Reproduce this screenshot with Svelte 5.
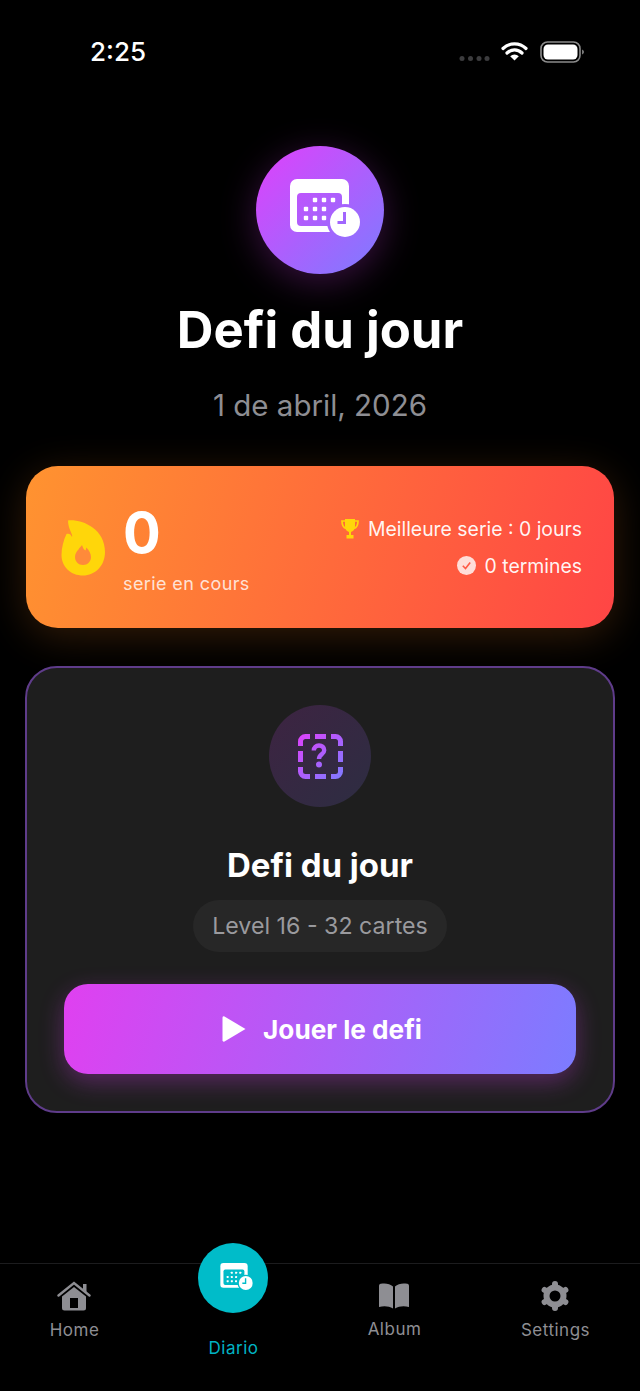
<script lang="ts">
  type Tab = { id: string; label: string };

  const tabs: Tab[] = [
    { id: 'home', label: 'Home' },
    { id: 'diario', label: 'Diario' },
    { id: 'album', label: 'Album' },
    { id: 'settings', label: 'Settings' },
  ];

  const dots = [
    [25, 21], [34, 21], [43, 21],
    [16, 30], [25, 30], [34, 30],
    [16, 39], [25, 39], [34, 39],
  ];
</script>

{#snippet calendar(id: string, w: number, h: number)}
  <svg width={w} height={h} viewBox="0 0 70 58" aria-hidden="true">
    <mask id={id}>
      <rect x="0" y="0" width="59" height="53" rx="7" fill="#fff" />
      <rect x="7" y="14" width="45" height="33" rx="4" fill="#000" />
      {#each dots as d}
        <rect x={d[0] - 2.2} y={d[1] - 2.2} width="4.4" height="4.4" rx="1" fill="#fff" />
      {/each}
      <circle cx="55" cy="43" r="18" fill="#000" />
      <circle cx="55" cy="43" r="15" fill="#fff" />
      <path d="M54.500 33v10.500h-7" fill="none" stroke="#000" stroke-width="3" />
    </mask>
    <rect width="70" height="58" fill="#fff" mask="url(#{id})" />
  </svg>
{/snippet}

<div class="app">
  <div class="status">
    <span class="time">2:25</span>
    <div class="status-icons">
      <svg class="signal" width="31" height="5" viewBox="0 0 31 5" aria-hidden="true">
        <circle cx="3" cy="2.5" r="2.5" /><circle cx="11.5" cy="2.5" r="2.5" /><circle cx="20" cy="2.5" r="2.5" /><circle cx="28" cy="2.5" r="2.5" />
      </svg>
      <svg width="27" height="20" viewBox="0 0 27 20" aria-hidden="true">
        <path d="M2 7.5a16.5 16.5 0 0 1 23 0M6 12a10.6 10.6 0 0 1 15 0" fill="none" stroke="#fff" stroke-width="3.2" stroke-linecap="round" />
        <path d="M13.5 19.5 9.2 15.2a6 6 0 0 1 8.6 0z" fill="#fff" />
      </svg>
      <svg class="battery" width="44" height="22" viewBox="0 0 44 22" aria-hidden="true">
        <rect x="1" y="1" width="39" height="20" rx="6.5" fill="none" stroke="#8b8b8b" stroke-width="1.6" />
        <rect x="3.5" y="3.5" width="34" height="15" rx="4.5" fill="#fff" />
        <path d="M42 8.5c1.2.4 2 1.300 2 2.500s-.8 2.100-2 2.500z" fill="#777" />
      </svg>
    </div>
  </div>

  <main class="main">
    <div class="hero-icon">{@render calendar('cal-hero', 70, 58)}</div>
    <h1 class="title">Defi du jour</h1>
    <p class="date">1 de abril, 2026</p>

    <section class="streak">
      <div class="streak-left">
        <svg class="flame" width="45" height="58" viewBox="61 519 45 58" aria-hidden="true">
          <path d="M68 520.500C81 519 105 528 105 552c0 14-10 23.500-22 23.500S61.500 567 61.500 555c0-7 2-15 5-21 2-1 4.500 0 5.500 3 1.500-2-4-8-4-16.500z" fill="#ffd60a" />
          <path d="M82 545c1 3 2 5 3.500 5.500.5-1 .6-2 .6-3 3 2.500 4.900 6 4.900 9.500 0 4.500-3.500 8-8 8s-8-3.500-8-8c0-3 1.500-5.500 3.500-7.500.5-1.500 2.500-3 3.500-4.500z" fill="#ff8a3a" />
        </svg>
        <div class="streak-count">
          <span class="count">0</span>
          <span class="count-label">serie en cours</span>
        </div>
      </div>
      <div class="streak-right">
        <div class="stat">
          <svg width="18" height="21" viewBox="0 0 18 21" aria-hidden="true">
            <path d="M4 1h10v7.500c0 3-2 5-4 5.500v3h2.500v3.500h-7V17H8v-3c-2-.5-4-2.500-4-5.500z" fill="#ffd60a" />
            <path d="M4 3H1c0 4 1 6.500 4 7.500M14 3h3c0 4-1 6.500-4 7.500" fill="none" stroke="#ffd60a" stroke-width="1.700" />
          </svg>
          <span>Meilleure serie : 0 jours</span>
        </div>
        <div class="stat">
          <svg width="19" height="19" viewBox="0 0 19 19" aria-hidden="true">
            <circle cx="9.500" cy="9.500" r="9.500" fill="#fff" fill-opacity="0.8" />
            <path d="M5.800 9.800 8.500 12.500 13.200 6.500" fill="none" stroke="#ff5a45" stroke-width="1.600" />
          </svg>
          <span>0 termines</span>
        </div>
      </div>
    </section>

    <section class="card">
      <div class="card-icon">
        <svg width="47" height="47" viewBox="0 0 47 47" aria-hidden="true">
          <defs>
            <linearGradient id="qgrad" x1="0" y1="0" x2="47" y2="47" gradientUnits="userSpaceOnUse">
              <stop offset="0" stop-color="#e040fb" />
              <stop offset="1" stop-color="#7c7cff" />
            </linearGradient>
          </defs>
          <g fill="none" stroke="url(#qgrad)" stroke-width="5">
            <path d="M13 3.500H8.500a5 5 0 0 0-5 5V13M18 3.500h11M34 3.500h4.500a5 5 0 0 1 5 5V13M43.500 18v11M43.500 34v4.500a5 5 0 0 1-5 5H34M29 43.500H18M13 43.500H8.500a5 5 0 0 1-5-5V34M3.500 29V18" />
            <path d="M16.800 17.500c0-3.200 2.300-5 5.200-5s5.200 1.800 5.200 4.700c0 4.300-5.200 4-5.200 8.800" stroke-width="4.400" />
          </g>
          <circle cx="22" cy="31.500" r="3" fill="url(#qgrad)" />
        </svg>
      </div>
      <h2 class="card-title">Defi du jour</h2>
      <div class="pill">Level 16 - 32 cartes</div>
      <button class="play" type="button">
        <svg width="25" height="28" viewBox="0 0 25 28" aria-hidden="true">
          <path d="M2.500 1.500 23.500 14 2.500 26.500a1.500 1.500 0 0 1-2-1.300V2.800a1.500 1.500 0 0 1 2-1.300z" fill="#fff" />
        </svg>
        <span>Jouer le defi</span>
      </button>
    </section>
  </main>

  <nav class="tabs">
    {#each tabs as tab}
      <div class="tab {tab.id}">
        {#if tab.id === 'home'}
          <svg class="tab-icon" width="34" height="30" viewBox="0 0 34 30" aria-hidden="true">
            <path d="M1.500 14.500 17 2l15.500 12.500" fill="none" stroke="#8e8e93" stroke-width="2.400" stroke-linecap="round" />
            <path d="M26 3h3.500v8.500L26 8.500z" fill="#8e8e93" />
            <path d="M5 15.500 17 6l12 9.500V27a2.500 2.500 0 0 1-2.500 2.500h-19A2.500 2.500 0 0 1 5 27z" fill="#8e8e93" />
            <rect x="13" y="17" width="8" height="10" fill="#000" />
          </svg>
        {:else if tab.id === 'diario'}
          <div class="tab-active">{@render calendar('cal-tab', 33, 27)}</div>
        {:else if tab.id === 'album'}
          <svg class="tab-icon" width="32" height="26" viewBox="0 0 32 26" aria-hidden="true">
            <path d="M15 3.500v22C11 23 6 22.500 1 24V3C1 1.800 1.500 1 2.800.8 7 0 12 .5 15 3.500z" fill="#8e8e93" />
            <path d="M17 3.500v22c4-2.500 9-3 14-1.500V3c0-1.200-.5-2-1.800-2.200C25 0 20 .5 17 3.500z" fill="#8e8e93" />
          </svg>
        {:else}
          <svg class="tab-icon" width="30" height="30" viewBox="0 0 30 30" aria-hidden="true">
            <circle cx="15" cy="15" r="8.500" fill="none" stroke="#8e8e93" stroke-width="6" />
            <g stroke="#8e8e93" stroke-width="6" stroke-linecap="round">
              <path d="M15 3v3M15 24v3M4.600 9l2.600 1.500M22.800 19.500l2.600 1.500M4.600 21l2.600-1.500M22.800 10.500 25.400 9" />
            </g>
          </svg>
        {/if}
        <span class="tab-label">{tab.label}</span>
      </div>
    {/each}
  </nav>
</div>

<style>
  :global(body) {
    background: #000;
  }
  .app {
    display: flex;
    flex-direction: column;
    width: 640px;
    height: 1391px;
    overflow: hidden;
    background: #000;
    color: #fff;
    font-family: Inter, 'Liberation Sans', sans-serif;
  }

  .status {
    display: flex;
    justify-content: space-between;
    align-items: flex-start;
    height: 100px;
    padding: 38px 56px 0 90px;
    box-sizing: border-box;
    flex-shrink: 0;
  }
  .time {
    font-size: 26px;
    line-height: 28px;
    font-weight: 500;
  }
  .status-icons {
    display: flex;
    align-items: flex-start;
    gap: 13px;
    padding-top: 3px;
  }
  .signal {
    margin-top: 15px;
    margin-right: -2px;
    fill: #3c3c3e;
  }
  .battery {
    margin-left: -1px;
  }

  .main {
    flex: 1;
    display: flex;
    flex-direction: column;
    align-items: center;
    padding: 46px 25px 0;
    box-sizing: border-box;
  }
  .hero-icon {
    width: 128px;
    height: 128px;
    border-radius: 50%;
    display: flex;
    align-items: center;
    justify-content: center;
    padding: 0 0 4px 10px;
    box-sizing: border-box;
    background: linear-gradient(135deg, #e040fb, #7c7cff);
    box-shadow: 0 8px 36px rgba(224, 64, 251, 0.26);
  }
  .title {
    margin: 26px 0 0;
    font-size: 50.8px;
    line-height: 60px;
    font-weight: 700;
  }
  .date {
    margin: 25px 0 0;
    font-size: 29.5px;
    line-height: 40px;
    color: #8e8e93;
  }

  .streak {
    width: 588px;
    height: 162px;
    margin-top: 41px;
    padding: 0 32px 0 35px;
    box-sizing: border-box;
    display: flex;
    justify-content: space-between;
    align-items: center;
    border-radius: 32px;
    background: linear-gradient(105deg, #ff9330, #ff4545);
    box-shadow: 0 8px 40px rgba(255, 140, 40, 0.2);
  }
  .streak-left {
    display: flex;
    align-items: flex-start;
    gap: 17px;
  }
  .flame {
    margin-top: 21px;
  }
  .streak-count {
    display: flex;
    flex-direction: column;
  }
  .count {
    font-size: 56px;
    line-height: 70px;
    font-weight: 700;
  }
  .count-label {
    margin-top: 4px;
    font-size: 18px;
    line-height: 24px;
    letter-spacing: 0.4px;
    color: rgba(255, 255, 255, 0.8);
  }
  .streak-right {
    display: flex;
    flex-direction: column;
    align-items: flex-end;
    gap: 13px;
  }
  .stat {
    display: flex;
    align-items: center;
    gap: 9px;
    font-size: 19.4px;
    line-height: 24px;
    font-weight: 400;
    color: rgba(255, 255, 255, 0.95);
  }

  .card {
    width: 590px;
    height: 447px;
    margin-top: 38px;
    padding-top: 37px;
    box-sizing: border-box;
    display: flex;
    flex-direction: column;
    align-items: center;
    border-radius: 32px;
    border: 2px solid #5f3c8a;
    background: #1e1e1e;
  }
  .card-icon {
    width: 102px;
    height: 102px;
    border-radius: 50%;
    display: flex;
    align-items: center;
    justify-content: center;
    background: linear-gradient(135deg, rgba(224, 64, 251, 0.16), rgba(124, 124, 255, 0.16));
  }
  .card-title {
    margin: 38px 0 0;
    font-size: 33px;
    line-height: 40px;
    font-weight: 700;
  }
  .pill {
    margin-top: 15px;
    height: 52px;
    padding: 0 19px;
    border-radius: 26px;
    display: flex;
    align-items: center;
    font-size: 23.2px;
    color: #9a9a9e;
    background: #272727;
  }
  .play {
    width: 512px;
    height: 90px;
    margin-top: 32px;
    padding: 0 0 0 4px;
    display: flex;
    align-items: center;
    justify-content: center;
    gap: 16px;
    border: none;
    border-radius: 24px;
    color: #fff;
    font-family: inherit;
    font-size: 26.2px;
    font-weight: 700;
    background: linear-gradient(105deg, #e040f0, #7c7cff);
    box-shadow: 0 8px 24px rgba(224, 64, 251, 0.3);
  }

  .tabs {
    height: 127px;
    flex-shrink: 0;
    display: grid;
    grid-template-columns: 148px 170px 152px 170px;
    border-top: 1px solid #1c1c1e;
  }
  .tab {
    display: flex;
    flex-direction: column;
    align-items: center;
    padding-top: 17px;
  }
  .tab-icon {
    display: block;
  }
  .album .tab-icon {
    margin-top: 2px;
    margin-bottom: 1px;
  }
  .tab-label {
    margin-top: 7px;
    padding-left: 1px;
    font-size: 17px;
    line-height: 24px;
    letter-spacing: 0.5px;
    color: #8e8e93;
  }
  .tab-active {
    width: 70px;
    height: 70px;
    margin-top: -38px;
    border-radius: 50%;
    display: flex;
    align-items: center;
    justify-content: center;
    padding: 0 0 3px 7px;
    box-sizing: border-box;
    background: #00bcc9;
  }
  .diario .tab-label {
    margin-top: 23px;
    color: #00b4c4;
  }
</style>
